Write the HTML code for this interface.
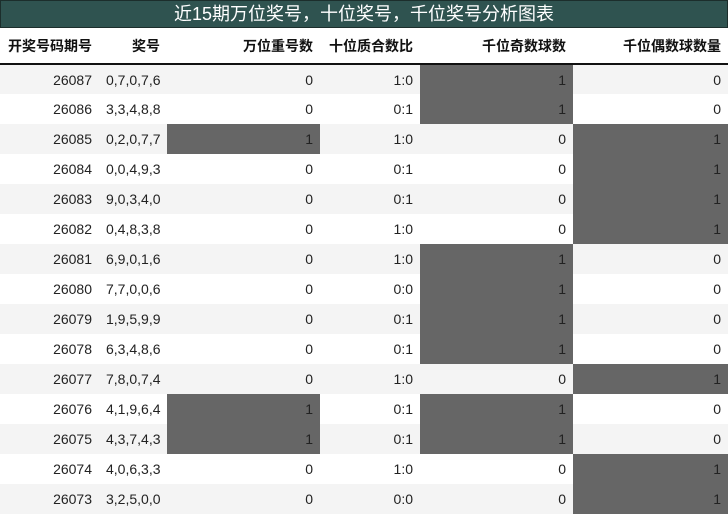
<html><head><style>
body{margin:0;width:728px;height:515px;overflow:hidden;background:#fff;font-family:"Liberation Sans","Noto Sans CJK SC",sans-serif;}
.t{position:absolute;left:0;top:0;width:726px;height:26px;background:#2f5350;border:1px solid #1c2e2c;color:#fff;font-size:18px;line-height:26px;text-align:center;}
table{position:absolute;left:0;top:28px;border-collapse:collapse;width:728px;table-layout:fixed;font-size:14px;color:#222;}
th{height:36px;font-weight:bold;text-align:right;padding:0 7px 0 0;border-bottom:2px solid #111;color:#111;}
th:first-child{text-align:left;padding-left:8px;}
td{height:30px;padding:0 7px 0 0;text-align:right;}
td:first-child{padding-right:11px;}
td:nth-child(2){text-align:left;padding-left:3px;}
tr:nth-child(odd) td{background:#f4f4f4}
td.g{background:#666!important}
</style></head><body>
<div class="t">近15期万位奖号，十位奖号，千位奖号分析图表</div>
<table>
<colgroup><col style="width:103px"><col style="width:64px"><col style="width:153px"><col style="width:100px"><col style="width:153px"><col style="width:155px"></colgroup>
<thead><tr><th>开奖号码期号</th><th>奖号</th><th>万位重号数</th><th>十位质合数比</th><th>千位奇数球数</th><th>千位偶数球数量</th></tr></thead>
<tbody>
<tr><td>26087</td><td>0,7,0,7,6</td><td>0</td><td>1:0</td><td class="g">1</td><td>0</td></tr>
<tr><td>26086</td><td>3,3,4,8,8</td><td>0</td><td>0:1</td><td class="g">1</td><td>0</td></tr>
<tr><td>26085</td><td>0,2,0,7,7</td><td class="g">1</td><td>1:0</td><td>0</td><td class="g">1</td></tr>
<tr><td>26084</td><td>0,0,4,9,3</td><td>0</td><td>0:1</td><td>0</td><td class="g">1</td></tr>
<tr><td>26083</td><td>9,0,3,4,0</td><td>0</td><td>0:1</td><td>0</td><td class="g">1</td></tr>
<tr><td>26082</td><td>0,4,8,3,8</td><td>0</td><td>1:0</td><td>0</td><td class="g">1</td></tr>
<tr><td>26081</td><td>6,9,0,1,6</td><td>0</td><td>1:0</td><td class="g">1</td><td>0</td></tr>
<tr><td>26080</td><td>7,7,0,0,6</td><td>0</td><td>0:0</td><td class="g">1</td><td>0</td></tr>
<tr><td>26079</td><td>1,9,5,9,9</td><td>0</td><td>0:1</td><td class="g">1</td><td>0</td></tr>
<tr><td>26078</td><td>6,3,4,8,6</td><td>0</td><td>0:1</td><td class="g">1</td><td>0</td></tr>
<tr><td>26077</td><td>7,8,0,7,4</td><td>0</td><td>1:0</td><td>0</td><td class="g">1</td></tr>
<tr><td>26076</td><td>4,1,9,6,4</td><td class="g">1</td><td>0:1</td><td class="g">1</td><td>0</td></tr>
<tr><td>26075</td><td>4,3,7,4,3</td><td class="g">1</td><td>0:1</td><td class="g">1</td><td>0</td></tr>
<tr><td>26074</td><td>4,0,6,3,3</td><td>0</td><td>1:0</td><td>0</td><td class="g">1</td></tr>
<tr><td>26073</td><td>3,2,5,0,0</td><td>0</td><td>0:0</td><td>0</td><td class="g">1</td></tr>
</tbody></table>
</body></html>
